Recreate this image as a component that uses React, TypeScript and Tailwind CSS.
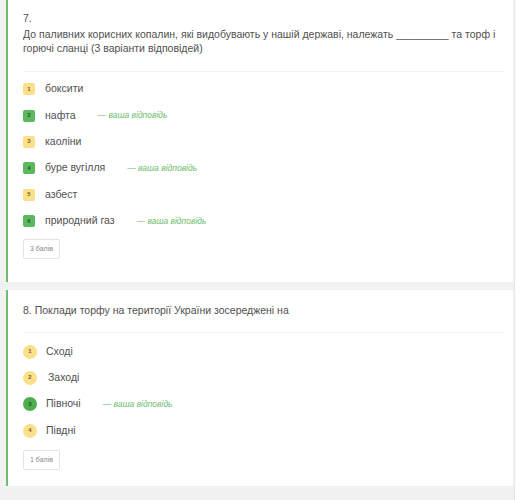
import React from 'react';

type Opt = { n: number; text: string; mine?: boolean; pad?: boolean };

const Q7: Opt[] = [
  { n: 1, text: 'боксити' },
  { n: 2, text: 'нафта', mine: true },
  { n: 3, text: 'каоліни' },
  { n: 4, text: 'буре вугілля', mine: true },
  { n: 5, text: 'азбест' },
  { n: 6, text: 'природний газ', mine: true },
];

const Q8: Opt[] = [
  { n: 1, text: 'Сході' },
  { n: 2, text: 'Заході', pad: true },
  { n: 3, text: 'Півночі', mine: true },
  { n: 4, text: 'Півдні' },
];

const Mine = () => (
  <span className="ml-[22px] text-[8.5px] italic text-[#6cbc6c]">— ваша відповідь</span>
);

const Points = ({ label }: { label: string }) => (
  <div className="w-[37px] h-[20px] border border-[#e3e3e3] rounded-[2px] flex items-center justify-center text-[7px] text-[#888]">
    {label}
  </div>
);

export default function App() {
  return (
    <div
      className="w-[520px] h-[500px] overflow-hidden bg-[#f1f1f1] flex text-[#505050]"
      style={{ fontFamily: '"Liberation Sans", Arial, sans-serif' }}
    >
      <div className="w-[514px] flex flex-col gap-[8px]">
        {/* question 7 */}
        <div className="ml-[6px] w-[507px] bg-white border-l-2 border-[#6cbf6b] pl-[15px] pr-[8px] pt-[11px] pb-[23px]">
          <div className="text-[10.5px] leading-[14px] mb-[2px]">7.</div>
          <div className="text-[10.5px] leading-[14px]">
            До паливних корисних копалин, які видобувають у нашій державі, належать _________ та торф і горючі сланці (3 варіанти відповідей)
          </div>
          <div className="mt-[16px] border-t border-[#f1f1f1] pt-[4px]">
            {Q7.map((o) => (
              <div key={o.n} className="h-[26.4px] flex items-center">
                <span
                  className={`w-[12px] h-[12px] rounded-[2px] flex items-center justify-center text-[6px] font-bold ${
                    o.mine ? 'bg-[#5cb85c] text-[#1d5a1d]' : 'bg-[#fbe08c] text-[#7a5e12]'
                  }`}
                >
                  {o.n}
                </span>
                <span className="ml-[10px] text-[10.5px]">{o.text}</span>
                {o.mine && <Mine />}
              </div>
            ))}
            <div className="mt-[5px]">
              <Points label="3 балів" />
            </div>
          </div>
        </div>

        {/* question 8 */}
        <div className="ml-[6px] w-[507px] bg-white border-l-2 border-[#6cbf6b] pl-[15px] pr-[8px] pt-[13px] pb-[16px]">
          <div className="text-[10.5px] leading-[14px]">8. Поклади торфу на території України зосереджені на</div>
          <div className="mt-[15px] border-t border-[#f1f1f1] pt-[5px]">
            {Q8.map((o) => (
              <div key={o.n} className="h-[26.4px] flex items-center">
                <span
                  className={`w-[14px] h-[14px] rounded-full flex items-center justify-center text-[6px] font-bold ${
                    o.mine ? 'bg-[#4cae4c] text-[#1d5a1d]' : 'bg-[#fbe08c] text-[#7a5e12]'
                  }`}
                >
                  {o.n}
                </span>
                <span className={`${o.pad ? 'ml-[11px]' : 'ml-[9px]'} text-[10.5px]`}>{o.text}</span>
                {o.mine && <Mine />}
              </div>
            ))}
            <div className="mt-[6px]">
              <Points label="1 балів" />
            </div>
          </div>
        </div>
      </div>
      <div className="w-[6px] bg-white border-l border-[#e6e6e6]" />
    </div>
  );
}
